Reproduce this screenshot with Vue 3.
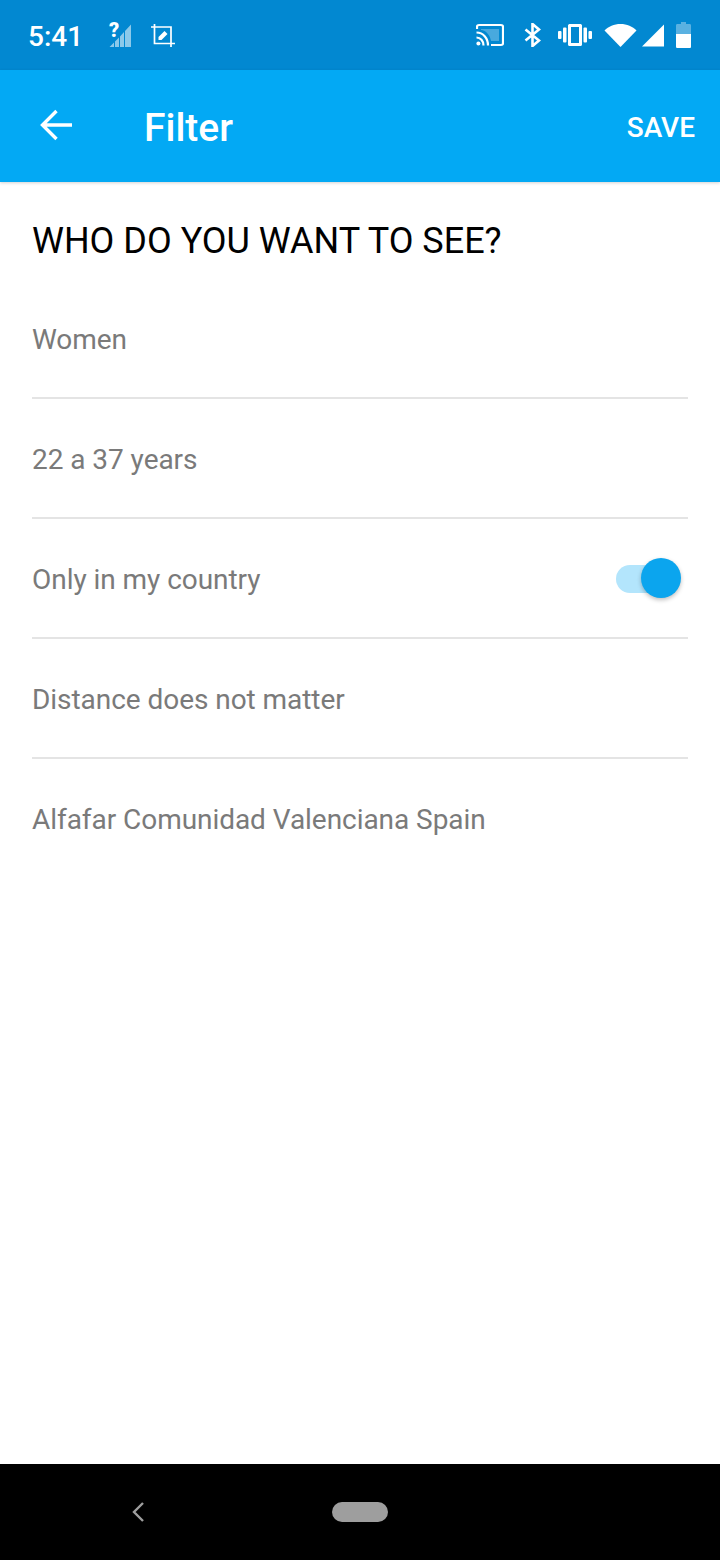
<template>
  <div class="screen">
    <div class="status-bar">
      <span class="clock">5:41</span>
      <svg class="ic-signal-q" width="24" height="26" viewBox="0 0 24 26">
        <path d="M1.500 25L6 20.500V25Z M7 25V19.500L11 15.500V25Z M12 25V14.500L16 10V25Z M17 25V9L23 2.500V25Z" fill="#fff" opacity="0.55" />
        <text x="1" y="15" class="q-mark">?</text>
      </svg>
      <svg class="ic-crop" width="24" height="24" viewBox="0 0 24 24" fill="none" stroke="#fff" stroke-width="1.700">
        <path d="M0 3H20V23 M3.500 0V19.500H24" />
        <path d="M7.500 16V13L13.500 7L16.500 10L10.500 16Z" fill="#fff" stroke="none" />
      </svg>
      <div class="status-right">
        <svg width="28" height="24" viewBox="0 0 28 24" fill="none" stroke="#fff" stroke-width="2.200">
          <path d="M1 6V3.500C1 2.500 2 2 3 2H25C26 2 27 2.500 27 3.500V20.500C27 21.500 26 22 25 22H15" />
          <path d="M0.500 9.500C7 9.500 12 15 12 22.500 M0.500 14.500C4.500 14.500 7.500 18 7.500 22.500" />
          <circle cx="2.400" cy="20.600" r="2" fill="#fff" stroke="none" />
          <path d="M5 6H23V18H15C14 12 10 7.500 5 7Z" fill="#fff" fill-opacity="0.28" stroke="none" />
        </svg>
        <svg class="ic-bt" width="17" height="24" viewBox="0 0 17 24" fill="none" stroke="#fff" stroke-width="2.600">
          <path d="M1.500 6.500L15 17.500L8.500 23V1L15 6.500L1.500 17.500" />
        </svg>
        <svg class="ic-vib" width="34" height="24" viewBox="0 0 34 24" fill="#fff">
          <path d="M10 2.500C10 1.500 11 1 12 1H22C23 1 24 1.500 24 2.500V21.500C24 22.500 23 23 22 23H12C11 23 10 22.500 10 21.500ZM13 4V20H21V4Z" fill-rule="evenodd" />
          <rect x="5" y="4.500" width="3.500" height="15" rx="1" />
          <rect x="25.500" y="4.500" width="3.500" height="15" rx="1" />
          <rect x="0" y="8" width="3.500" height="8" rx="1" />
          <rect x="30.500" y="8" width="3.500" height="8" rx="1" />
        </svg>
        <svg class="ic-wifi" width="33" height="24" viewBox="0 0 33 24" fill="#fff">
          <path d="M0.500 7.500C4.500 3.500 10 1 16.500 1C23 1 28.500 3.500 32.500 7.500L16.500 24Z" />
        </svg>
        <svg class="ic-cell" width="22" height="24" viewBox="0 0 22 24" fill="#fff">
          <path d="M0 23.500L22 1.500V23.500Z" />
        </svg>
        <svg class="ic-batt" width="15" height="26" viewBox="0 0 15 26" fill="#fff">
          <path d="M5 0H10V2H13.500C14.500 2 15 2.500 15 3.500V12H0V3.500C0 2.500 0.500 2 1.500 2H5Z" opacity="0.35" />
          <path d="M0 12H15V24.500C15 25.500 14.500 26 13.500 26H1.500C0.500 26 0 25.500 0 24.500Z" />
        </svg>
      </div>
    </div>

    <header class="app-bar">
      <svg class="back" width="34" height="32" viewBox="0 0 34 32" fill="none" stroke="#fff" stroke-width="3.400">
        <path d="M32 16H3 M16.500 2L2.500 16L16.500 30" />
      </svg>
      <h1 class="title">Filter</h1>
      <span class="save">SAVE</span>
    </header>

    <main class="content">
      <h2 class="heading">WHO DO YOU WANT TO SEE?</h2>
      <div v-for="row in rows" :key="row.label" class="row">
        <span class="label">{{ row.label }}</span>
        <div v-if="row.toggle" class="switch">
          <div class="track"></div>
          <div class="thumb"></div>
        </div>
      </div>
    </main>

    <footer class="nav-bar">
      <svg class="nav-back" width="14" height="20" viewBox="0 0 14 20" fill="none" stroke="#9e9e9e" stroke-width="2.400">
        <path d="M12 1L3 10L12 19" />
      </svg>
      <div class="pill"></div>
    </footer>
  </div>
</template>

<script setup>
const rows = [
  { label: "Women" },
  { label: "22 a 37 years" },
  { label: "Only in my country", toggle: true },
  { label: "Distance does not matter" },
  { label: "Alfafar Comunidad Valenciana Spain" },
];
</script>

<style>
html,
body {
  background: #fff;
}
</style>

<style scoped>
.screen {
  width: 720px;
  height: 1560px;
  display: flex;
  flex-direction: column;
  font-family: Roboto, "Liberation Sans", sans-serif;
  background: #fff;
  overflow: hidden;
}
.status-bar {
  height: 70px;
  flex: none;
  display: flex;
  align-items: center;
  padding: 0 29px 0 28px;
  background: #0288d1;
  color: #fff;
}
.clock {
  font-size: 28px;
  font-weight: 500;
  width: 53px;
  padding-top: 2px;
}
.ic-signal-q {
  margin-left: 27px;
  overflow: visible;
}
.q-mark {
  font-family: Roboto, sans-serif;
  font-size: 20px;
  font-weight: 900;
  fill: #fff;
}
.ic-crop {
  margin-left: 19px;
  margin-top: 2px;
}
.status-right {
  margin-left: auto;
  display: flex;
  align-items: center;
}
.ic-bt {
  margin-left: 20px;
}
.ic-vib {
  margin-left: 17px;
}
.ic-wifi {
  margin-left: 12px;
}
.ic-cell {
  margin-left: 5px;
}
.ic-batt {
  margin-left: 12px;
}
.app-bar {
  height: 112px;
  flex: none;
  display: flex;
  align-items: center;
  padding: 0 25px 0 40px;
  background: #03a9f4;
  color: #fff;
  box-shadow: 0 1px 3px rgba(0, 0, 0, 0.18);
  position: relative;
}
.back {
  margin-top: -2px;
}
.title {
  margin: 3px 0 0 70px;
  font-size: 39px;
  font-weight: 500;
}
.save {
  margin-left: auto;
  margin-top: 2px;
  font-size: 28px;
  font-weight: 500;
}
.content {
  flex: 1;
  padding: 0 32px;
}
.heading {
  margin: 0;
  padding-top: 38px;
  height: 97px;
  box-sizing: border-box;
  font-size: 36px;
  line-height: 43px;
  font-weight: 400;
  color: #000;
}
.row {
  height: 120px;
  box-sizing: border-box;
  display: flex;
  align-items: center;
  justify-content: space-between;
  border-bottom: 2px solid #e4e4e4;
  font-size: 28px;
  color: #7a7a7a;
}
.row:last-child {
  border-bottom: none;
}
.label {
  padding-top: 2px;
  letter-spacing: -0.05px;
}
.row:last-child .label {
  padding-top: 0;
}
.switch {
  position: relative;
  width: 65px;
  height: 40px;
  margin-right: 7px;
}
.track {
  position: absolute;
  left: 0;
  top: 7px;
  width: 60px;
  height: 28px;
  border-radius: 14px;
  background: #b3e5fc;
}
.thumb {
  position: absolute;
  right: 0;
  top: 0;
  width: 40px;
  height: 40px;
  border-radius: 50%;
  background: #0ba5ee;
  box-shadow: 0 2px 4px rgba(0, 0, 0, 0.25);
}
.nav-bar {
  height: 96px;
  flex: none;
  display: flex;
  align-items: center;
  background: #000;
  padding-left: 131px;
}
.pill {
  width: 56px;
  height: 20px;
  margin-left: 187px;
  border-radius: 10px;
  background: #9e9e9e;
}
</style>
